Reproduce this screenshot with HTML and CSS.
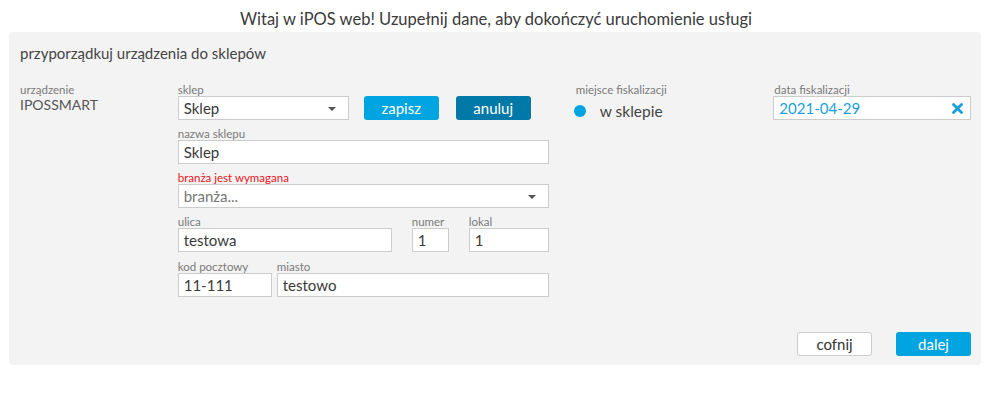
FILE: index.html
```html
<!DOCTYPE html>
<html lang="pl">
<head>
  <meta charset="UTF-8">
  <title>iPOS web</title>
  <link rel="stylesheet" href="styles.css">
</head>
<body>
  <h1 class="welcome">Witaj w iPOS web! Uzupełnij dane, aby dokończyć uruchomienie usługi</h1>

  <div class="panel">
    <h2>przyporządkuj urządzenia do sklepów</h2>

    <div class="form-row">
      <div class="col-device">
        <div class="label">urządzenie</div>
        <div class="device-name">IPOSSMART</div>
      </div>

      <div class="col-shop">
        <div class="field">
          <div class="label">sklep</div>
          <div class="shop-line">
            <div class="select select-shop">Sklep <span class="caret"></span></div>
            <button class="btn btn-blue">zapisz</button>
            <button class="btn btn-dark">anuluj</button>
          </div>
        </div>
        <div class="field">
          <div class="label">nazwa sklepu</div>
          <div class="input">Sklep</div>
        </div>
        <div class="field">
          <div class="label error">branża jest wymagana</div>
          <div class="select placeholder">branża... <span class="caret"></span></div>
        </div>
        <div class="field-group street">
          <div class="field">
            <div class="label">ulica</div>
            <div class="input">testowa</div>
          </div>
          <div class="field">
            <div class="label">numer</div>
            <div class="input">1</div>
          </div>
          <div class="field">
            <div class="label">lokal</div>
            <div class="input">1</div>
          </div>
        </div>
        <div class="field-group city">
          <div class="field">
            <div class="label">kod pocztowy</div>
            <div class="input">11-111</div>
          </div>
          <div class="field">
            <div class="label">miasto</div>
            <div class="input">testowo</div>
          </div>
        </div>
      </div>

      <div class="col-place">
        <div class="label">miejsce fiskalizacji</div>
        <div class="radio"><span class="dot"></span>w sklepie</div>
      </div>

      <div class="col-date">
        <div class="label">data fiskalizacji</div>
        <div class="input date">2021-04-29
          <svg class="clear" width="11" height="11" viewBox="0 0 11 11">
            <path d="M1.5 1.5 L9.5 9.5 M9.5 1.5 L1.5 9.5" stroke="#1a9fdb" stroke-width="2.8" stroke-linecap="round"/>
          </svg>
        </div>
      </div>
    </div>

    <div class="footer">
      <button class="btn btn-white">cofnij</button>
      <button class="btn btn-blue">dalej</button>
    </div>
  </div>
</body>
</html>
```

FILE: styles.css
```css
body {
  margin: 0;
  font-family: Lato, "Open Sans", sans-serif;
  color: #3a3a3a;
  background-color: #fff;
}
.welcome {
  margin: 0;
  height: 32px;
  line-height: 38px;
  font-size: 16.5px;
  font-weight: normal;
  text-align: center;
  color: #3a3a3a;
}
.panel {
  display: flex;
  flex-direction: column;
  box-sizing: border-box;
  height: 333px;
  margin: 0 11px 0 9px;
  padding: 11px 10px 9px 11px;
  background-color: #f3f3f3;
  border-radius: 4px;
}
.panel h2 {
  margin: 0 0 21px;
  font-size: 15px;
  line-height: 20px;
  font-weight: normal;
  color: #444;
}
.form-row {
  display: flex;
}
.label {
  font-size: 11.5px;
  line-height: 12px;
  color: #7a7a7a;
}
.label.error {
  color: #e8141c;
}
.col-device {
  width: 158px;
}
.device-name {
  font-size: 14px;
  line-height: 18px;
  color: #555;
}
.col-shop {
  width: 371px;
}
.field {
  margin-bottom: 8px;
}
.field-group .field {
  margin-bottom: 0;
}
.field-group {
  display: grid;
  margin-bottom: 9px;
}
.street {
  grid-template-columns: 214px 37px 80px;
  column-gap: 20px;
}
.city {
  grid-template-columns: 94px 272px;
  column-gap: 5px;
}
.input, .select {
  position: relative;
  box-sizing: border-box;
  height: 24px;
  padding: 0 5px;
  background-color: #fff;
  border: 1px solid #ccc;
  font-size: 15px;
  line-height: 22px;
  color: #3a3a3a;
}
.placeholder {
  color: #777;
}
.caret {
  position: absolute;
  right: 12px;
  top: 10px;
  border-left: 4px solid transparent;
  border-right: 4px solid transparent;
  border-top: 4px solid #555;
}
.shop-line {
  display: flex;
  align-items: center;
}
.select-shop {
  width: 171px;
  margin-right: 15px;
}
.btn {
  box-sizing: border-box;
  width: 75px;
  height: 24px;
  padding: 0;
  border: none;
  border-radius: 3px;
  font-family: Lato, "Open Sans", sans-serif;
  font-size: 15px;
  color: #fff;
}
.btn-blue {
  background-color: #00a4e0;
}
.btn-dark {
  margin-left: 17px;
  background-color: #0079a8;
}
.btn-white {
  background-color: #fff;
  border: 1px solid #ccc;
  color: #333;
}
.col-place {
  width: 198px;
  margin-left: 25px;
  padding-left: 2px;
}
.radio {
  display: flex;
  align-items: center;
  margin-top: 5px;
  font-size: 15.5px;
  line-height: 20px;
  color: #444;
}
.dot {
  width: 12px;
  height: 12px;
  margin-left: -2px;
  margin-right: 14px;
  border-radius: 50%;
  background-color: #00a4e0;
}
.col-date {
  width: 198px;
}
.col-date .label {
  padding-left: 1px;
}
.date {
  color: #1a9fdb;
}
.clear {
  position: absolute;
  right: 7px;
  top: 6px;
}
.footer {
  display: flex;
  justify-content: flex-end;
  gap: 24px;
  margin-top: auto;
}
```
